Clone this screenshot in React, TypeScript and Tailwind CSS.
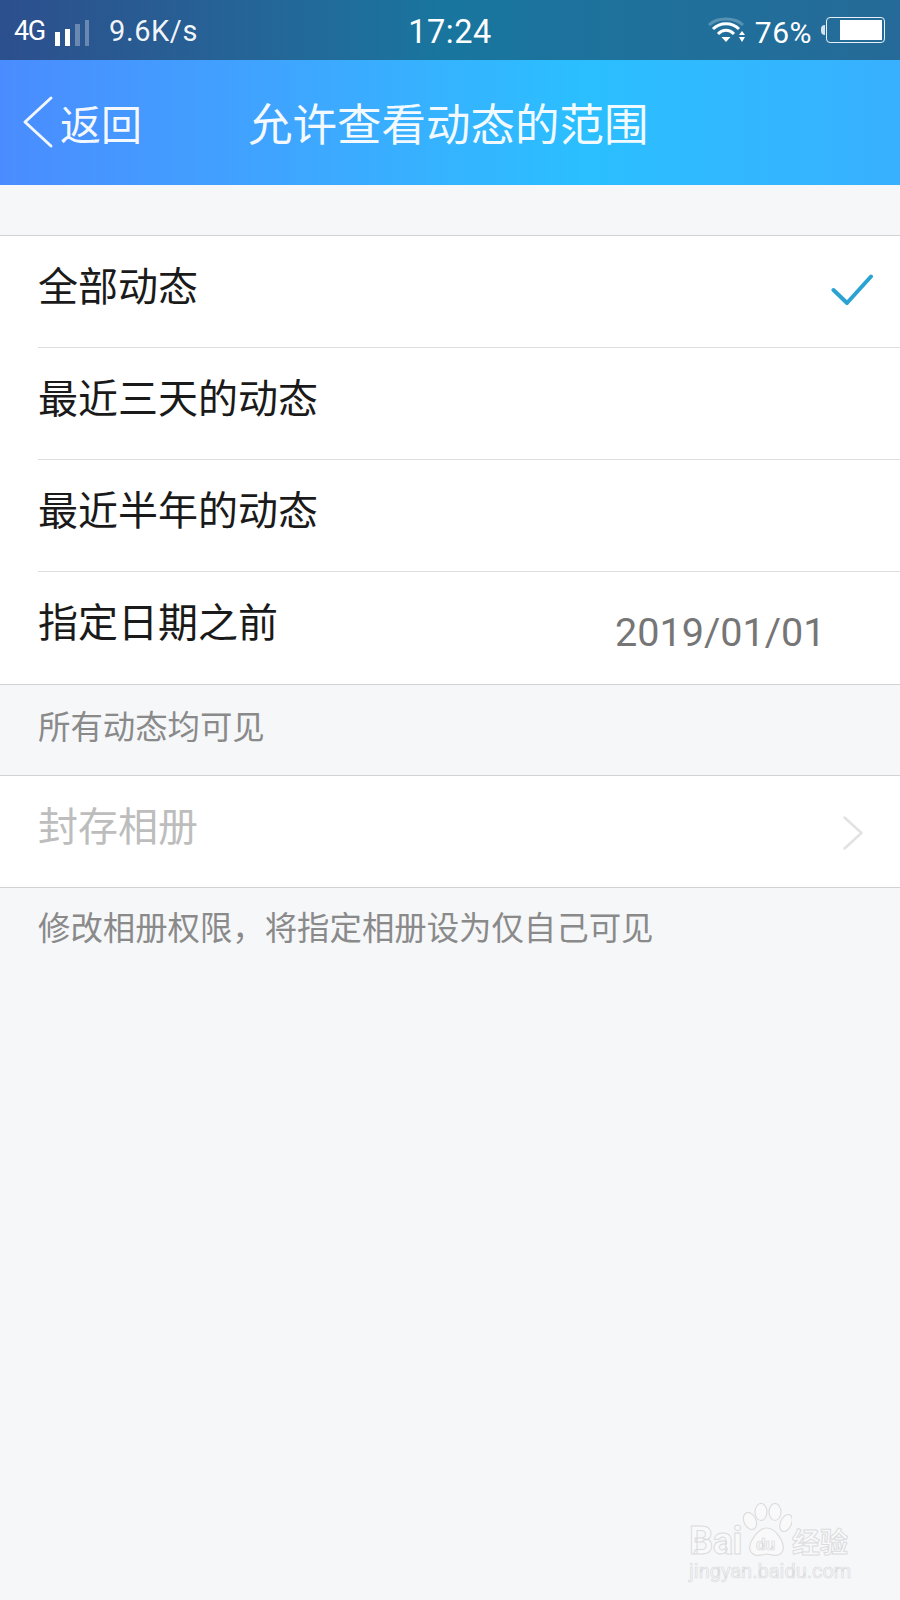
import React from "react";

const sans = "font-['Noto_Sans_CJK_SC','Noto_Sans',sans-serif]";
const latin = "font-['Roboto','Noto_Sans',sans-serif]";

const Check = () => (
  <svg width="42" height="34" viewBox="0 0 42 34" fill="none" className="absolute right-[27px] top-[38px]">
    <path d="M2.5 16 L16 29 L40 2.5" stroke="#2ba3d2" strokeWidth="4" strokeLinecap="round" strokeLinejoin="round" />
  </svg>
);

const Chevron = ({ color, w, h, sw }: { color: string; w: number; h: number; sw: number }) => (
  <svg width={w} height={h} viewBox={`0 0 ${w} ${h}`} fill="none">
    <path d={`M${w - sw} ${sw} L${sw} ${h / 2} L${w - sw} ${h - sw}`} stroke={color} strokeWidth={sw} strokeLinecap="round" strokeLinejoin="round" />
  </svg>
);

const StatusBar = () => (
  <div className={`h-[60px] grid grid-cols-3 items-center text-white bg-gradient-to-r from-[#2c4f8d] via-[#18769e] to-[#256a98] ${latin}`}>
    <div className="flex items-center pl-[14px]">
      <span className="text-[27px] tracking-[-1.5px] w-[34px] mt-[2px]">4G</span>
      <div className="flex items-end gap-[5px] ml-[7px] mt-[6px] h-[26px]">
        <span className="w-[5px] h-[14px] bg-white" />
        <span className="w-[5px] h-[17px] bg-white" />
        <span className="w-[5px] h-[22px] bg-white/30" />
        <span className="w-[4px] h-[26px] bg-white/30" />
      </div>
      <span className="text-[29px] ml-[20px] mt-[4px] tracking-[0.6px] text-white/95">9.6K/s</span>
    </div>
    <span className="text-center text-[32.5px] mt-[4px] tracking-[0.5px]">17:24</span>
    <div className="flex items-center justify-end pr-[15px]">
      <svg width="38" height="28" viewBox="0 0 38 28" fill="none">
        <path d="M1 9 C9 1 27 1 35 9" stroke="#ffffff" strokeOpacity="0.25" strokeWidth="3" />
        <path d="M5 13 C12 6 24 6 31 13" stroke="#ffffff" strokeWidth="3" />
        <path d="M10 18 C15 13 21 13 26 18" stroke="#ffffff" strokeWidth="3" />
        <path d="M13.5 21 L22.5 21 L18 26 Z" fill="#ffffff" />
        <path d="M34 15 L37 19 L31 19 Z M31 21 L37 21 L34 26 Z" fill="#ffffff" />
      </svg>
      <span className="text-[30px] ml-[9px] mt-[4px] tracking-[0.5px]">76%</span>
      <span className="w-[4px] h-[10px] ml-[9px] bg-white/80 rounded-l-sm" />
      <div className="relative ml-[1px] w-[59px] h-[26px] rounded-[4px] border border-white/90">
        <div className="absolute right-[2px] top-[2px] bottom-[2px] w-[42px] bg-white" />
      </div>
    </div>
  </div>
);

const NavBar = () => (
  <div className={`relative h-[125px] flex items-center text-white bg-gradient-to-r from-[#4a8cff] via-[#2abfff] via-65% to-[#38b0ff] ${sans}`}>
    <div className="ml-[22px] mt-[-1px] flex items-center">
      <Chevron color="#f0f7ff" w={32} h={54} sw={3} />
      <span className="text-[41px] ml-[6px] leading-none text-white/95">返回</span>
    </div>
    <span className="absolute left-[248px] top-[40px] text-[44.5px] leading-none whitespace-nowrap text-white/95">允许查看动态的范围</span>
  </div>
);

const Row = ({ label, right, last, dim }: { label: string; right?: React.ReactNode; last?: boolean; dim?: boolean }) => (
  <div className={`relative pl-[38px] ${dim ? "h-[111px]" : "h-[112px]"}`}>
    <div className={`h-full flex items-start pt-[22px] ${last ? "" : "border-b border-[#dedede]"}`}>
      <span className={`text-[40px] leading-[52px] ${dim ? "text-[#bdbdbd]" : "text-[#1a1a1a]"}`}>{label}</span>
    </div>
    {right}
  </div>
);

const Watermark = () => (
  <div className="absolute right-[49px] bottom-[21px] w-[162px] h-[76px]">
    <svg width="50" height="56" viewBox="0 0 50 56" fill="#f9f9fa" stroke="#dddddf" strokeWidth="1.2" className="absolute left-[53px] top-0">
      <ellipse cx="8" cy="18" rx="6" ry="9" transform="rotate(-25 8 18)" />
      <ellipse cx="19" cy="9" rx="6" ry="8.5" />
      <ellipse cx="33" cy="9" rx="6" ry="8.5" />
      <ellipse cx="44" cy="20" rx="5.5" ry="9" transform="rotate(25 44 20)" />
      <path d="M25 25 C34 25 43 40 41 47 C38 55 30 52 25 51 C19 52 11 55 8 47 C6 40 16 25 25 25 Z" />
    </svg>
    <span className={`absolute left-[67px] top-[33px] text-[17px] leading-none font-bold text-transparent [-webkit-text-stroke:0.7px_#d8d8da] ${latin}`}>du</span>
    <span className={`absolute left-0 top-[19px] text-[38px] leading-none font-bold tracking-[-0.5px] text-[#f9f9fa] [-webkit-text-stroke:1px_#dcdcde] ${latin}`}>Bai</span>
    <span className={`absolute left-[103px] top-[24px] text-[28px] leading-none font-bold whitespace-nowrap text-[#f9f9fa] [-webkit-text-stroke:1px_#dcdcde] ${sans}`}>经验</span>
    <span className={`absolute left-0 top-[58px] text-[20px] leading-none whitespace-nowrap text-transparent [-webkit-text-stroke:0.7px_#dcdcde] ${latin}`}>jingyan.baidu.com</span>
  </div>
);

export default function App() {
  return (
    <div className={`relative w-[900px] h-[1600px] overflow-hidden bg-[#f6f7f9] ${sans}`}>
      <StatusBar />
      <NavBar />
      <div className="mt-[50px] bg-white border-y border-[#d2d2d2]">
        <Row label="全部动态" right={<Check />} />
        <Row label="最近三天的动态" />
        <Row label="最近半年的动态" />
        <Row
          label="指定日期之前"
          last
          right={<span className={`absolute left-[615px] top-[37px] text-[39.6px] leading-[48px] text-[#767676] ${latin}`}>2019/01/01</span>}
        />
      </div>
      <div className="h-[90px] pl-[38px] pt-[19px] text-[32.4px] leading-[42px] text-[#8a8a8a]">所有动态均可见</div>
      <div className="bg-white border-y border-[#d2d2d2]">
        <Row
          label="封存相册"
          last
          dim
          right={
            <div className="absolute right-[36px] top-[39px] rotate-180">
              <Chevron color="#e2e2e2" w={22} h={36} sw={2.5} />
            </div>
          }
        />
      </div>
      <div className="pl-[38px] pt-[17px] text-[32.4px] leading-[42px] text-[#8a8a8a]">修改相册权限，将指定相册设为仅自己可见</div>
      <Watermark />
    </div>
  );
}
